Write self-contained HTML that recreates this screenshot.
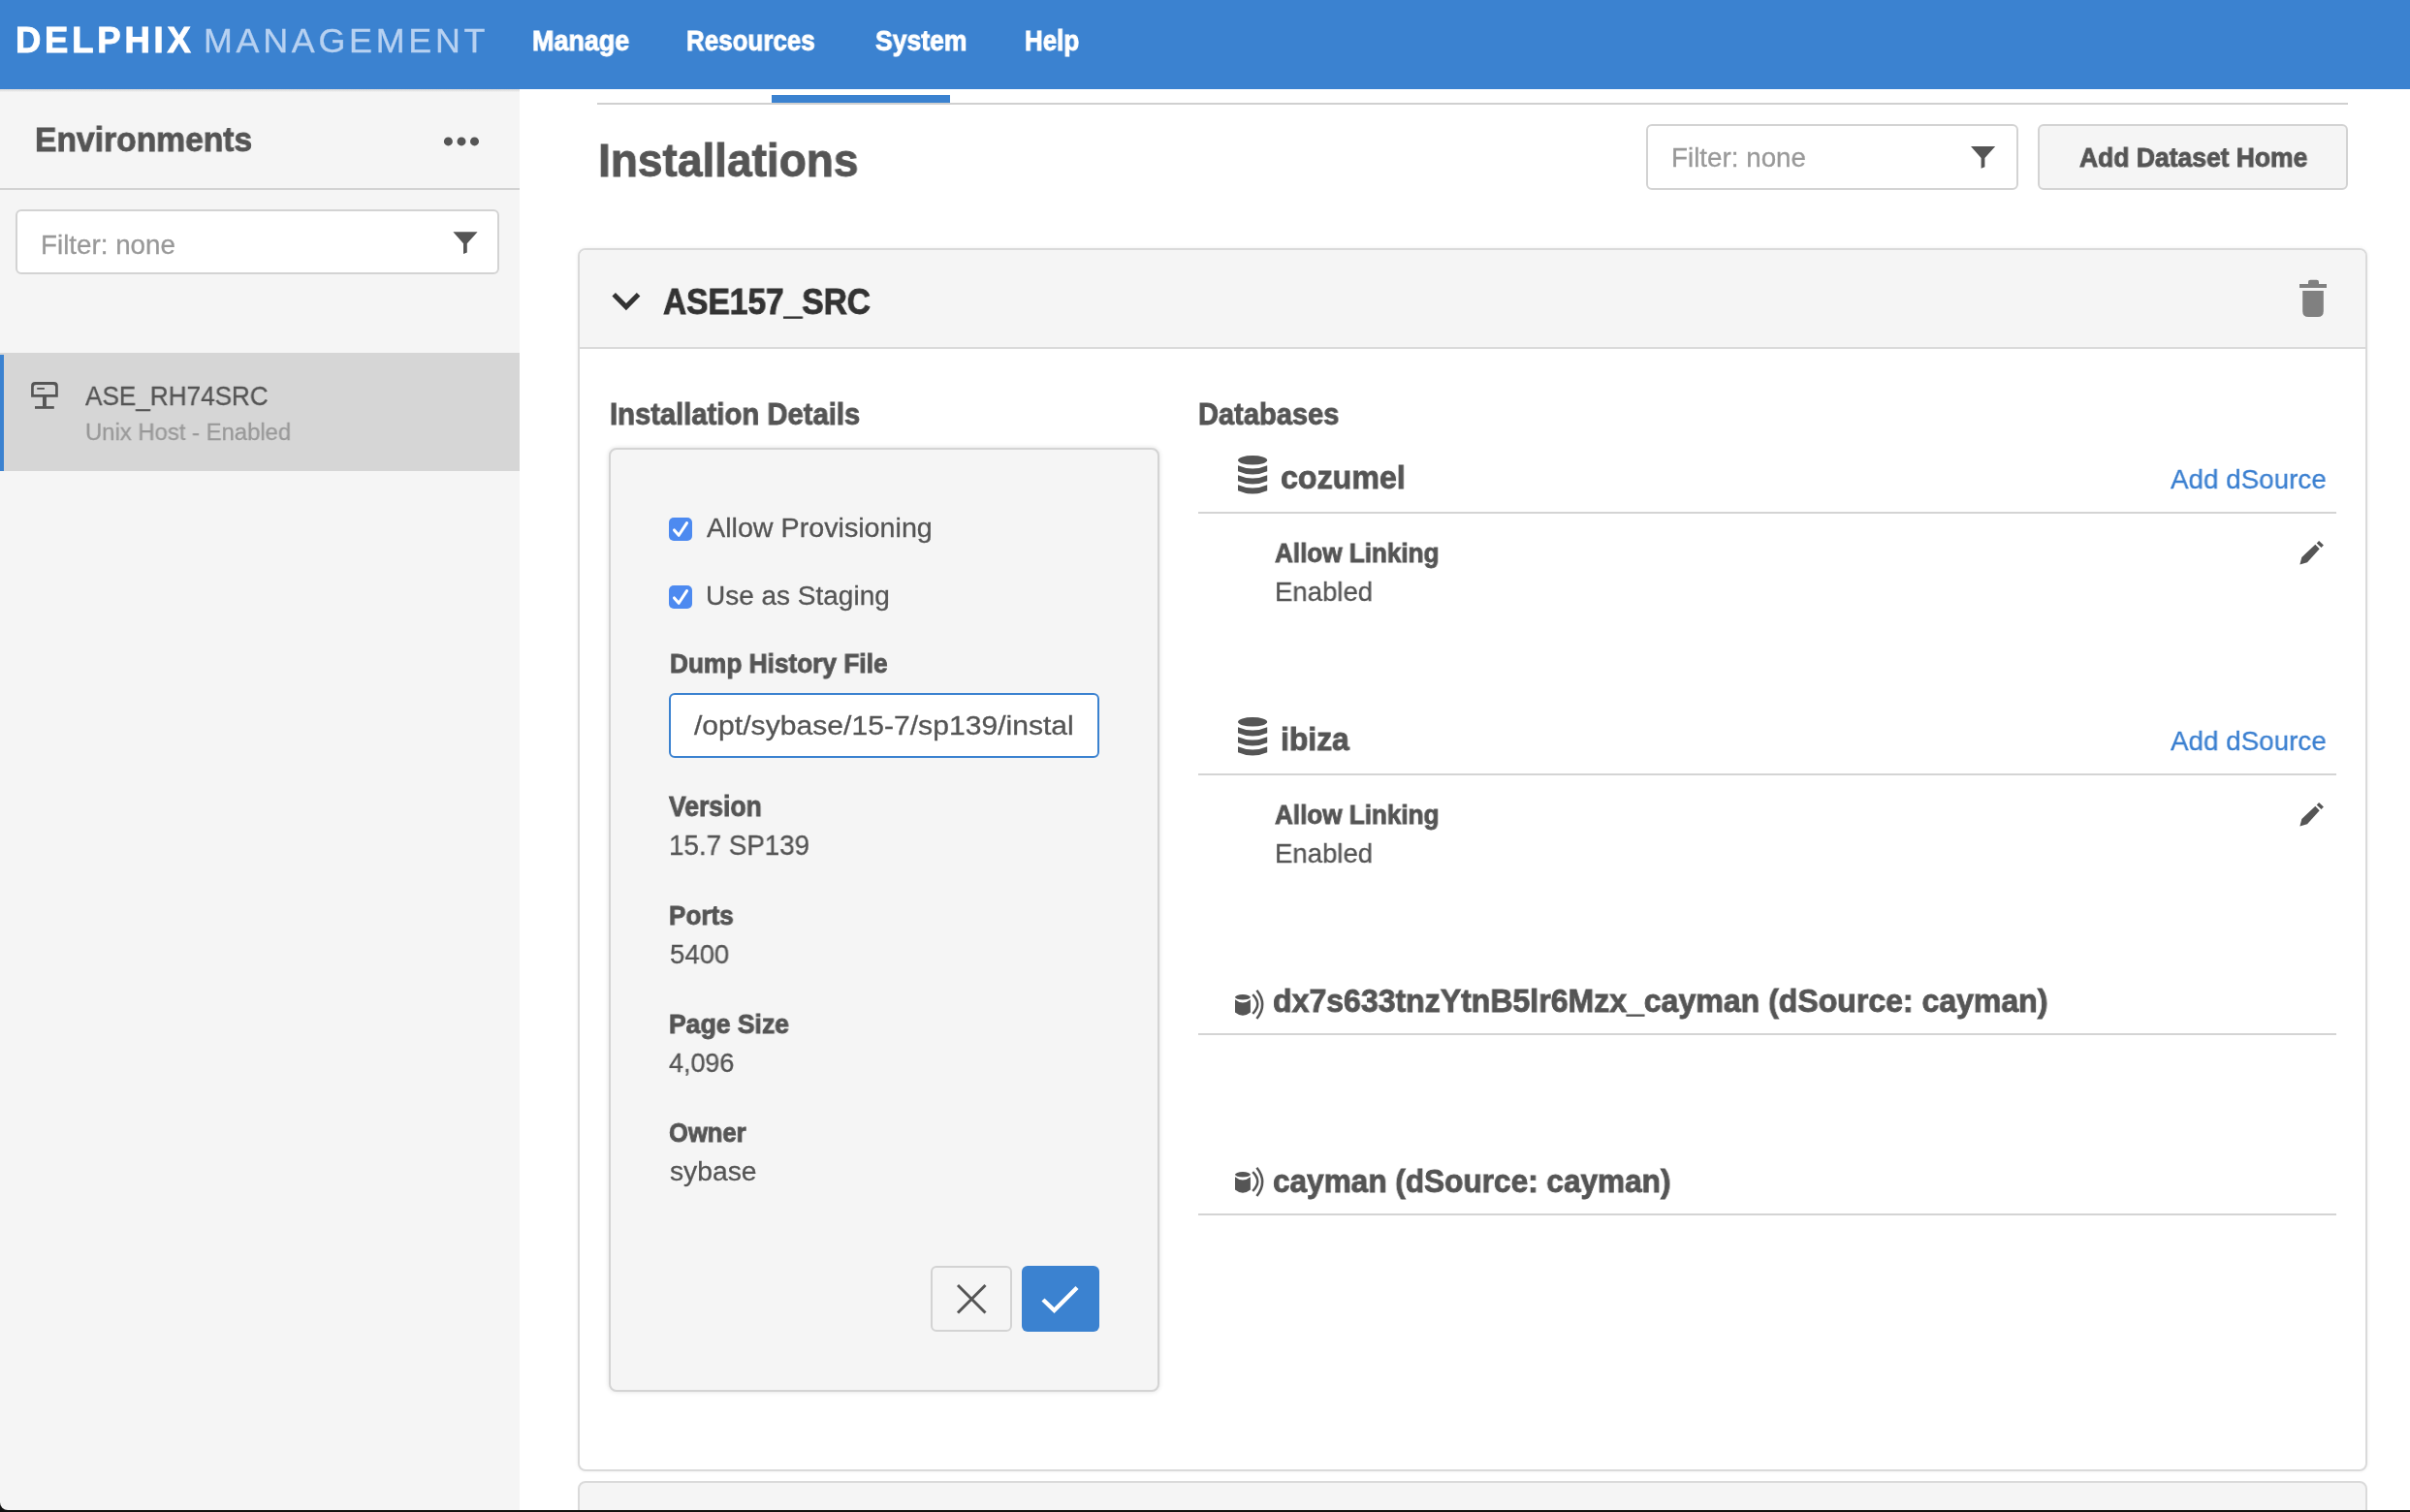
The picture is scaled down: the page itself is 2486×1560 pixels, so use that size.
<!DOCTYPE html>
<html><head><meta charset="utf-8"><title>Delphix Management</title>
<style>
*{margin:0;padding:0;box-sizing:border-box}
html,body{width:2486px;height:1560px;overflow:hidden;background:#fff;font-family:"Liberation Sans",sans-serif}
.a{position:absolute}
.t{position:absolute;white-space:nowrap;line-height:1;font-family:"Liberation Sans",sans-serif;will-change:transform}
svg{position:absolute;overflow:visible}
</style></head><body>
<!-- header -->
<div class="a" style="left:0;top:0;width:2486px;height:92px;background:#3b82d0"></div>
<!-- sidebar -->
<div class="a" style="left:0;top:92px;width:536px;height:1468px;background:#f5f5f5"></div>
<div class="a" style="left:0;top:194px;width:536px;height:2px;background:#d2d2d2"></div>
<div class="a" style="left:0;top:92px;width:536px;height:3px;background:linear-gradient(#dcdcdc,#e6e6e6 60%,#f5f5f5)"></div>
<div class="a" style="left:16px;top:216px;width:499px;height:67px;background:#fff;border:2px solid #d3d3d3;border-radius:6px"></div>
<div class="a" style="left:0;top:364px;width:536px;height:122px;background:#d6d6d6"></div>
<div class="a" style="left:0;top:366px;width:4px;height:120px;background:#3b82d0"></div>
<!-- tabs line -->
<div class="a" style="left:616px;top:106px;width:1806px;height:2px;background:#d0d0d0"></div>
<div class="a" style="left:796px;top:98px;width:184px;height:8px;background:#3b82d0"></div>
<!-- main filter + button -->
<div class="a" style="left:1698px;top:128px;width:384px;height:68px;background:#fff;border:2px solid #d3d3d3;border-radius:6px"></div>
<div class="a" style="left:2102px;top:128px;width:320px;height:68px;background:#f5f5f5;border:2px solid #d3d3d3;border-radius:6px"></div>
<!-- card -->
<div class="a" style="left:596px;top:256px;width:1846px;height:1262px;background:#fff;border:2px solid #dadada;border-radius:8px;overflow:hidden;box-shadow:0 0 4px rgba(0,0,0,0.06)">
  <div class="a" style="left:0;top:0;width:1842px;height:102px;background:#f5f5f5;border-bottom:2px solid #dadada"></div>
</div>
<!-- next card -->
<div class="a" style="left:596px;top:1528px;width:1846px;height:100px;background:#f5f5f5;border:2px solid #dadada;border-radius:8px"></div>
<!-- inner panel -->
<div class="a" style="left:628px;top:462px;width:568px;height:974px;background:#f5f5f5;border:2px solid #d4d4d4;border-radius:8px;box-shadow:0 0 5px rgba(0,0,0,0.13)"></div>
<!-- checkboxes -->
<div class="a" style="left:690px;top:534px;width:24px;height:24px;background:#4d8af0;border-radius:5px"></div>
<div class="a" style="left:690px;top:604px;width:24px;height:24px;background:#4d8af0;border-radius:5px"></div>
<svg style="left:690px;top:534px" width="24" height="24"><polyline points="5.5,12.9 10.2,18.3 18.5,5.6" fill="none" stroke="#fff" stroke-width="3" stroke-linecap="round" stroke-linejoin="round"/></svg>
<svg style="left:690px;top:604px" width="24" height="24"><polyline points="5.5,12.9 10.2,18.3 18.5,5.6" fill="none" stroke="#fff" stroke-width="3" stroke-linecap="round" stroke-linejoin="round"/></svg>
<!-- input -->
<div class="a" style="left:690px;top:715px;width:444px;height:67px;background:#fff;border:2px solid #3b82d0;border-radius:6px"></div>
<!-- action buttons -->
<div class="a" style="left:960px;top:1306px;width:84px;height:68px;background:#f5f5f5;border:2px solid #d3d3d3;border-radius:6px"></div>
<div class="a" style="left:1054px;top:1306px;width:80px;height:68px;background:#3b82d0;border-radius:6px"></div>
<svg style="left:0;top:0" width="1" height="1">
  <line x1="988" y1="1326" x2="1016.5" y2="1354.5" stroke="#555" stroke-width="3"/>
  <line x1="1016.5" y1="1326" x2="988" y2="1354.5" stroke="#555" stroke-width="3"/>
  <polyline points="1076,1341 1087.5,1352 1111,1328.5" fill="none" stroke="#fff" stroke-width="4.4"/>
</svg>
<!-- db separators -->
<div class="a" style="left:1236px;top:528px;width:1174px;height:2px;background:#d4d4d4"></div>
<div class="a" style="left:1236px;top:798px;width:1174px;height:2px;background:#d4d4d4"></div>
<div class="a" style="left:1236px;top:1066px;width:1174px;height:2px;background:#d4d4d4"></div>
<div class="a" style="left:1236px;top:1252px;width:1174px;height:2px;background:#d4d4d4"></div>
<!-- icons -->
<svg style="left:0;top:0" width="1" height="1">
  <!-- sidebar funnel -->
  <path d="M467.4,239.3 H492.6 L481.8,251.2 V260.6 L478,262 V251.2 Z" fill="#555"/>
  <!-- main funnel -->
  <path d="M2033,151 H2058.2 L2047.4,162.9 V172.3 L2043.6,173.7 V162.9 Z" fill="#555"/>
  <!-- dots -->
  <circle cx="462.4" cy="145.9" r="4.5" fill="#555"/>
  <circle cx="476" cy="145.9" r="4.5" fill="#555"/>
  <circle cx="489.5" cy="145.9" r="4.5" fill="#555"/>
  <!-- chevron -->
  <polyline points="633.2,303.8 645.9,316.6 658.6,303.8" fill="none" stroke="#333" stroke-width="5"/>
  <!-- trash -->
  <path d="M2381,293 V291 Q2381,288.7 2383.3,288.7 H2389.7 Q2392,288.7 2392,291 V293 H2400 V297 H2372 V293 Z" fill="#808080"/>
  <path d="M2375.2,300 H2396.8 V321 Q2396.8,327 2390.8,327 H2381.2 Q2375.2,327 2375.2,321 Z" fill="#808080"/>
  <!-- host icon -->
  <path fill="#555" fill-rule="evenodd" d="M32.1,409.7 V398 Q32.1,393.9 36.2,393.9 H55.7 Q59.8,393.9 59.8,398 V409.7 Z M34.8,407 H57.1 V399.2 Q57.1,396.9 54.8,396.9 H37.1 Q34.8,396.9 34.8,399.2 Z"/>
  <rect x="38.2" y="400" width="7.7" height="1.8" fill="#555"/>
  <rect x="44" y="409" width="3.9" height="10.5" fill="#555"/>
  <rect x="36" y="419.1" width="19.8" height="2.7" fill="#555"/>
  <!-- pencils -->
  <g transform="translate(2372.4,558)" fill="#555">
    <path d="M0,24.4 L1.9,17.1 L15.9,3.8 L20.3,8.3 L7.6,22.2 Z"/>
    <path d="M17.3,2.4 L19.7,0 L24.5,4.6 L22.1,7.0 Z"/>
  </g>
  <g transform="translate(2372.4,828)" fill="#555">
    <path d="M0,24.4 L1.9,17.1 L15.9,3.8 L20.3,8.3 L7.6,22.2 Z"/>
    <path d="M17.3,2.4 L19.7,0 L24.5,4.6 L22.1,7.0 Z"/>
  </g>
</svg>
<svg style="left:0;top:0" width="1" height="1"><g transform="translate(1277,470)" fill="#555"><ellipse cx="15.1" cy="4.8" rx="15.1" ry="4.8"/><path d="M0,10.3 Q15.1,16.9 30.2,10.3 V16.3 Q15.1,22.9 0,16.3 Z"/><path d="M0,20.2 Q15.1,26.8 30.2,20.2 V26.2 Q15.1,32.8 0,26.2 Z"/><path d="M0,30.2 Q15.1,36.8 30.2,30.2 V36.2 Q15.1,42.8 0,36.2 Z"/></g></svg><svg style="left:0;top:0" width="1" height="1"><g transform="translate(1277,740)" fill="#555"><ellipse cx="15.1" cy="4.8" rx="15.1" ry="4.8"/><path d="M0,10.3 Q15.1,16.9 30.2,10.3 V16.3 Q15.1,22.9 0,16.3 Z"/><path d="M0,20.2 Q15.1,26.8 30.2,20.2 V26.2 Q15.1,32.8 0,26.2 Z"/><path d="M0,30.2 Q15.1,36.8 30.2,30.2 V36.2 Q15.1,42.8 0,36.2 Z"/></g></svg>
<svg style="left:0;top:0" width="1" height="1"><g transform="translate(1274,1026)" fill="#555">
  <ellipse cx="7.95" cy="2.85" rx="7.95" ry="2.75"/>
  <path d="M0,5.3 Q7.95,11.9 15.9,5.3 V18.5 Q7.95,24.9 0,18.5 Z"/>
  <path d="M18.2,0.2 Q28.3,10 18.2,19.8" fill="none" stroke="#555" stroke-width="2.5"/>
  <path d="M22.4,-4.2 Q34,10.4 22.4,25" fill="none" stroke="#555" stroke-width="2.5"/>
</g></svg><svg style="left:0;top:0" width="1" height="1"><g transform="translate(1274,1209)" fill="#555">
  <ellipse cx="7.95" cy="2.85" rx="7.95" ry="2.75"/>
  <path d="M0,5.3 Q7.95,11.9 15.9,5.3 V18.5 Q7.95,24.9 0,18.5 Z"/>
  <path d="M18.2,0.2 Q28.3,10 18.2,19.8" fill="none" stroke="#555" stroke-width="2.5"/>
  <path d="M22.4,-4.2 Q34,10.4 22.4,25" fill="none" stroke="#555" stroke-width="2.5"/>
</g></svg>
<!-- bottom black bar -->
<div class="a" style="left:0;top:1550px;width:12px;height:10px;background:#111"></div>
<div class="a" style="left:0;top:1540px;width:40px;height:18px;background:#f5f5f5;border-bottom-left-radius:8px"></div>
<div class="a" style="left:0;top:1558px;width:2486px;height:2px;background:#111"></div>
<div class="t" id="delphix" style="left:16.20px;top:24.21px;font-size:36.45px;font-weight:700;color:#ffffff;letter-spacing:3.800px;transform:scaleX(1.0000);transform-origin:0 0;-webkit-text-stroke:0.9px #ffffff;">DELPHIX</div>
<div class="t" id="mgmt" style="left:209.60px;top:25.01px;font-size:35.89px;font-weight:400;color:#b7d1f1;letter-spacing:3.711px;transform:scaleX(1.0000);transform-origin:0 0;-webkit-text-stroke:0.3px #b7d1f1;">MANAGEMENT</div>
<div class="t" id="nav1" style="left:548.70px;top:28.21px;font-size:28.77px;font-weight:700;color:#ffffff;letter-spacing:0.000px;transform:scaleX(0.9366);transform-origin:0 0;-webkit-text-stroke:0.9px #ffffff;">Manage</div>
<div class="t" id="nav2" style="left:708.40px;top:28.21px;font-size:28.77px;font-weight:700;color:#ffffff;letter-spacing:0.000px;transform:scaleX(0.9028);transform-origin:0 0;-webkit-text-stroke:0.9px #ffffff;">Resources</div>
<div class="t" id="nav3" style="left:903.20px;top:28.21px;font-size:28.77px;font-weight:700;color:#ffffff;letter-spacing:0.000px;transform:scaleX(0.9229);transform-origin:0 0;-webkit-text-stroke:0.9px #ffffff;">System</div>
<div class="t" id="nav4" style="left:1057.30px;top:28.21px;font-size:28.77px;font-weight:700;color:#ffffff;letter-spacing:0.000px;transform:scaleX(0.9019);transform-origin:0 0;-webkit-text-stroke:0.9px #ffffff;">Help</div>
<div class="t" id="env" style="left:36.00px;top:126.80px;font-size:35.89px;font-weight:700;color:#555555;letter-spacing:0.000px;transform:scaleX(0.9371);transform-origin:0 0;-webkit-text-stroke:0.9px #555555;">Environments</div>
<div class="t" id="sfilter" style="left:41.90px;top:238.90px;font-size:27.79px;font-weight:400;color:#999999;letter-spacing:0.000px;transform:scaleX(0.9986);transform-origin:0 0;-webkit-text-stroke:0.3px #999999;">Filter: none</div>
<div class="t" id="host" style="left:88.00px;top:393.91px;font-size:28.35px;font-weight:400;color:#555555;letter-spacing:0.000px;transform:scaleX(0.9216);transform-origin:0 0;-webkit-text-stroke:0.3px #555555;">ASE_RH74SRC</div>
<div class="t" id="hostsub" style="left:87.70px;top:433.72px;font-size:24.02px;font-weight:400;color:#999999;letter-spacing:0.000px;transform:scaleX(0.9933);transform-origin:0 0;-webkit-text-stroke:0.3px #999999;">Unix Host - Enabled</div>
<div class="t" id="inst" style="left:616.70px;top:140.81px;font-size:48.18px;font-weight:700;color:#555555;letter-spacing:0.000px;transform:scaleX(0.9553);transform-origin:0 0;-webkit-text-stroke:0.9px #555555;">Installations</div>
<div class="t" id="mfilter" style="left:1724.40px;top:148.90px;font-size:27.79px;font-weight:400;color:#999999;letter-spacing:0.000px;transform:scaleX(1.0001);transform-origin:0 0;-webkit-text-stroke:0.3px #999999;">Filter: none</div>
<div class="t" id="adh" style="left:2144.70px;top:148.90px;font-size:27.79px;font-weight:700;color:#555555;letter-spacing:0.000px;transform:scaleX(0.9530);transform-origin:0 0;-webkit-text-stroke:0.9px #555555;">Add Dataset Home</div>
<div class="t" id="ase" style="left:684.00px;top:293.82px;font-size:36.17px;font-weight:700;color:#333333;letter-spacing:0.000px;transform:scaleX(0.9256);transform-origin:0 0;-webkit-text-stroke:0.9px #333333;">ASE157_SRC</div>
<div class="t" id="idet" style="left:629.00px;top:411.91px;font-size:30.59px;font-weight:700;color:#555555;letter-spacing:0.000px;transform:scaleX(0.9554);transform-origin:0 0;-webkit-text-stroke:0.9px #555555;">Installation Details</div>
<div class="t" id="dbs" style="left:1235.90px;top:411.91px;font-size:30.59px;font-weight:700;color:#555555;letter-spacing:0.000px;transform:scaleX(0.9501);transform-origin:0 0;-webkit-text-stroke:0.9px #555555;">Databases</div>
<div class="t" id="prov" style="left:728.90px;top:530.91px;font-size:27.93px;font-weight:400;color:#555555;letter-spacing:0.000px;transform:scaleX(1.0274);transform-origin:0 0;-webkit-text-stroke:0.3px #555555;">Allow Provisioning</div>
<div class="t" id="stag" style="left:728.30px;top:600.91px;font-size:27.93px;font-weight:400;color:#555555;letter-spacing:0.000px;transform:scaleX(1.0022);transform-origin:0 0;-webkit-text-stroke:0.3px #555555;">Use as Staging</div>
<div class="t" id="dump" style="left:690.50px;top:670.71px;font-size:27.65px;font-weight:700;color:#555555;letter-spacing:0.000px;transform:scaleX(0.9492);transform-origin:0 0;-webkit-text-stroke:0.9px #555555;">Dump History File</div>
<div class="t" id="path" style="left:715.90px;top:735.01px;font-size:27.79px;font-weight:400;color:#555555;letter-spacing:0.000px;transform:scaleX(1.0842);transform-origin:0 0;-webkit-text-stroke:0.3px #555555;">/opt/sybase/15-7/sp139/instal</div>
<div class="t" id="ver" style="left:689.90px;top:818.10px;font-size:28.63px;font-weight:700;color:#555555;letter-spacing:0.000px;transform:scaleX(0.9256);transform-origin:0 0;-webkit-text-stroke:0.9px #555555;">Version</div>
<div class="t" id="verv" style="left:690.00px;top:858.11px;font-size:28.77px;font-weight:400;color:#555555;letter-spacing:0.000px;transform:scaleX(0.9653);transform-origin:0 0;-webkit-text-stroke:0.3px #555555;">15.7 SP139</div>
<div class="t" id="ports" style="left:690.40px;top:929.91px;font-size:28.35px;font-weight:700;color:#555555;letter-spacing:0.000px;transform:scaleX(0.9197);transform-origin:0 0;-webkit-text-stroke:0.9px #555555;">Ports</div>
<div class="t" id="portsv" style="left:691.00px;top:970.70px;font-size:27.79px;font-weight:400;color:#555555;letter-spacing:0.000px;transform:scaleX(0.9907);transform-origin:0 0;-webkit-text-stroke:0.3px #555555;">5400</div>
<div class="t" id="psize" style="left:690.40px;top:1042.91px;font-size:27.93px;font-weight:700;color:#555555;letter-spacing:0.000px;transform:scaleX(0.9509);transform-origin:0 0;-webkit-text-stroke:0.9px #555555;">Page Size</div>
<div class="t" id="psizev" style="left:690.40px;top:1082.70px;font-size:27.79px;font-weight:400;color:#555555;letter-spacing:0.000px;transform:scaleX(0.9688);transform-origin:0 0;-webkit-text-stroke:0.3px #555555;">4,096</div>
<div class="t" id="owner" style="left:690.00px;top:1153.80px;font-size:28.21px;font-weight:700;color:#555555;letter-spacing:0.000px;transform:scaleX(0.9072);transform-origin:0 0;-webkit-text-stroke:0.9px #555555;">Owner</div>
<div class="t" id="ownerv" style="left:690.70px;top:1194.70px;font-size:27.79px;font-weight:400;color:#555555;letter-spacing:0.000px;transform:scaleX(1.0164);transform-origin:0 0;-webkit-text-stroke:0.3px #555555;">sybase</div>
<div class="t" id="coz" style="left:1320.90px;top:475.81px;font-size:33.80px;font-weight:700;color:#555555;letter-spacing:0.000px;transform:scaleX(0.9525);transform-origin:0 0;-webkit-text-stroke:0.9px #555555;">cozumel</div>
<div class="t" id="add1" style="left:2239.00px;top:480.01px;font-size:28.21px;font-weight:400;color:#3a7fd0;letter-spacing:0.000px;transform:scaleX(0.9853);transform-origin:0 0;-webkit-text-stroke:0.3px #3a7fd0;">Add dSource</div>
<div class="t" id="al1" style="left:1314.90px;top:555.91px;font-size:28.21px;font-weight:700;color:#555555;letter-spacing:0.000px;transform:scaleX(0.9246);transform-origin:0 0;-webkit-text-stroke:0.9px #555555;">Allow Linking</div>
<div class="t" id="en1" style="left:1314.80px;top:595.80px;font-size:28.21px;font-weight:400;color:#555555;letter-spacing:0.000px;transform:scaleX(0.9764);transform-origin:0 0;-webkit-text-stroke:0.3px #555555;">Enabled</div>
<div class="t" id="ibz" style="left:1321.00px;top:745.81px;font-size:33.80px;font-weight:700;color:#555555;letter-spacing:0.000px;transform:scaleX(0.9416);transform-origin:0 0;-webkit-text-stroke:0.9px #555555;">ibiza</div>
<div class="t" id="add2" style="left:2239.00px;top:749.80px;font-size:28.21px;font-weight:400;color:#3a7fd0;letter-spacing:0.000px;transform:scaleX(0.9853);transform-origin:0 0;-webkit-text-stroke:0.3px #3a7fd0;">Add dSource</div>
<div class="t" id="al2" style="left:1314.90px;top:826.01px;font-size:28.21px;font-weight:700;color:#555555;letter-spacing:0.000px;transform:scaleX(0.9246);transform-origin:0 0;-webkit-text-stroke:0.9px #555555;">Allow Linking</div>
<div class="t" id="en2" style="left:1314.80px;top:865.91px;font-size:28.21px;font-weight:400;color:#555555;letter-spacing:0.000px;transform:scaleX(0.9764);transform-origin:0 0;-webkit-text-stroke:0.3px #555555;">Enabled</div>
<div class="t" id="dx" style="left:1313.00px;top:1015.80px;font-size:33.38px;font-weight:700;color:#555555;letter-spacing:0.000px;transform:scaleX(0.9599);transform-origin:0 0;-webkit-text-stroke:0.9px #555555;">dx7s633tnzYtnB5lr6Mzx_cayman (dSource: cayman)</div>
<div class="t" id="cay" style="left:1313.00px;top:1201.80px;font-size:33.38px;font-weight:700;color:#555555;letter-spacing:0.000px;transform:scaleX(0.9456);transform-origin:0 0;-webkit-text-stroke:0.9px #555555;">cayman (dSource: cayman)</div>
</body></html>
